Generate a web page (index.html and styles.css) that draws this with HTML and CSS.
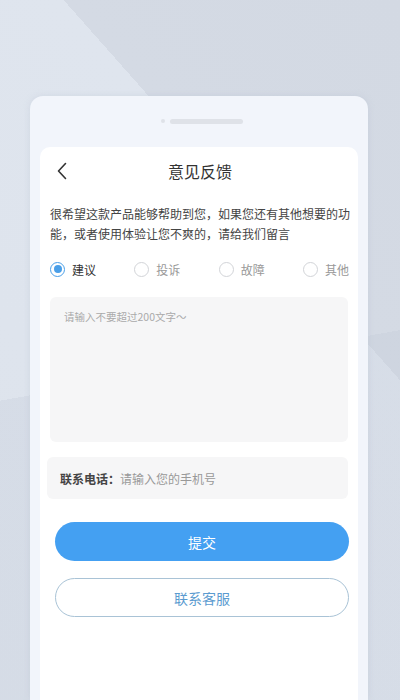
FILE: index.html
```html
<!DOCTYPE html>
<html lang="zh-CN">
<head>
<meta charset="utf-8">
<title>意见反馈</title>
<link rel="stylesheet" href="styles.css">
</head>
<body>
<div class="phone">
  <div class="speaker"><span class="cam"></span><span class="grill"></span></div>
  <div class="screen">
    <div class="header">
      <svg class="back" width="12" height="18" viewBox="0 0 12 18"><path d="M9.5 1.5 L2.5 9 L9.5 16.5" fill="none" stroke="#333" stroke-width="1.6" stroke-linecap="round" stroke-linejoin="round"/></svg>
      <div class="title">意见反馈</div>
    </div>
    <p class="intro">很希望这款产品能够帮助到您，如果您还有其他想要的功能，或者使用体验让您不爽的，请给我们留言</p>
    <div class="radios">
      <div class="radio on"><span class="dot"></span><span class="lbl">建议</span></div>
      <div class="radio"><span class="dot"></span><span class="lbl">投诉</span></div>
      <div class="radio"><span class="dot"></span><span class="lbl">故障</span></div>
      <div class="radio"><span class="dot"></span><span class="lbl">其他</span></div>
    </div>
    <div class="textarea">请输入不要超过200文字～</div>
    <div class="phone-row"><span class="key">联系电话：</span><span class="ph">请输入您的手机号</span></div>
    <div class="btn primary">提交</div>
    <div class="btn outline">联系客服</div>
  </div>
</div>
</body>
</html>
```
FILE: styles.css
```css
html, body {
  margin: 0;
  padding: 0;
}
body {
  width: 400px;
  height: 700px;
  overflow: hidden;
  font-family: "Noto Sans CJK SC", "Noto Sans", sans-serif;
  background:
    linear-gradient(170deg, rgba(0,0,0,0) 0%, rgba(0,0,0,0) 52%, rgba(190,198,212,0.25) 52%, rgba(190,198,212,0.25) 100%),
    linear-gradient(48.5deg, #dde3ec 0%, #dfe5ee 67%, #d4dae4 67%, #d3d9e3 100%);
}
.phone {
  margin: 96px 0 0 30px;
  width: 338px;
  height: 604px;
  background: #f2f5fb;
  border-radius: 13px 13px 0 0;
  box-shadow: 0 0 6px rgba(180, 190, 205, 0.35);
  display: flex;
  flex-direction: column;
  align-items: center;
}
.speaker {
  height: 51px;
  display: flex;
  align-items: flex-start;
  gap: 5px;
  padding-top: 23px;
  box-sizing: border-box;
  margin-left: 6px;
}
.cam {
  width: 4px;
  height: 4px;
  border-radius: 50%;
  background: #dfe2e8;
}
.grill {
  width: 73px;
  height: 5px;
  border-radius: 3px;
  background: #dfe2e8;
}
.screen {
  width: 318px;
  flex: 1;
  background: #fff;
  border-radius: 10px 10px 0 0;
  padding: 0 9px 0 10px;
  box-sizing: border-box;
}
.header {
  height: 48px;
  display: flex;
  align-items: center;
  position: relative;
}
.back {
  margin-left: 6px;
}
.title {
  position: absolute;
  left: 0;
  right: 0;
  text-align: center;
  font-size: 16px;
  color: #333;
  pointer-events: none;
  margin-left: 1px;
}
.intro {
  margin: 9px 0 0 0;
  font-size: 12px;
  line-height: 20px;
  color: #444;
  width: 300px;
}
.radios {
  margin-top: 15px;
  height: 20px;
  display: flex;
  justify-content: space-between;
  align-items: center;
  width: 299px;
}
.radio {
  display: flex;
  align-items: center;
  gap: 7px;
}
.dot {
  width: 15px;
  height: 15px;
  box-sizing: border-box;
  border-radius: 50%;
  border: 1px solid #d2d4d8;
  display: flex;
  align-items: center;
  justify-content: center;
}
.radio.on .dot {
  border: 1.5px solid #4a9fe8;
}
.radio.on .dot::after {
  content: "";
  width: 8px;
  height: 8px;
  border-radius: 50%;
  background: #4a9fe8;
}
.lbl {
  font-size: 12px;
  color: #999;
}
.radio.on .lbl {
  color: #333;
}
.textarea {
  margin-top: 18px;
  height: 145px;
  width: 298px;
  background: #f6f6f7;
  border-radius: 6px;
  box-sizing: border-box;
  padding: 13px 14px;
  font-size: 10.5px;
  line-height: 14px;
  color: #aaa;
}
.phone-row {
  margin: 15px 0 0 -3px;
  height: 42px;
  width: 301px;
  background: #f6f6f7;
  border-radius: 6px;
  box-sizing: border-box;
  padding-left: 13px;
  display: flex;
  align-items: center;
  font-size: 12px;
}
.key {
  color: #444;
  font-weight: 600;
}
.ph {
  color: #999;
}
.btn {
  margin-left: 5px;
  width: 294px;
  height: 39px;
  box-sizing: border-box;
  border-radius: 20px;
  display: flex;
  align-items: center;
  justify-content: center;
  font-size: 14px;
}
.primary {
  margin-top: 23px;
  background: #44a0f2;
  color: #fff;
}
.outline {
  margin-top: 17px;
  border: 1px solid #a9c3d6;
  color: #5b9bd0;
}
```
